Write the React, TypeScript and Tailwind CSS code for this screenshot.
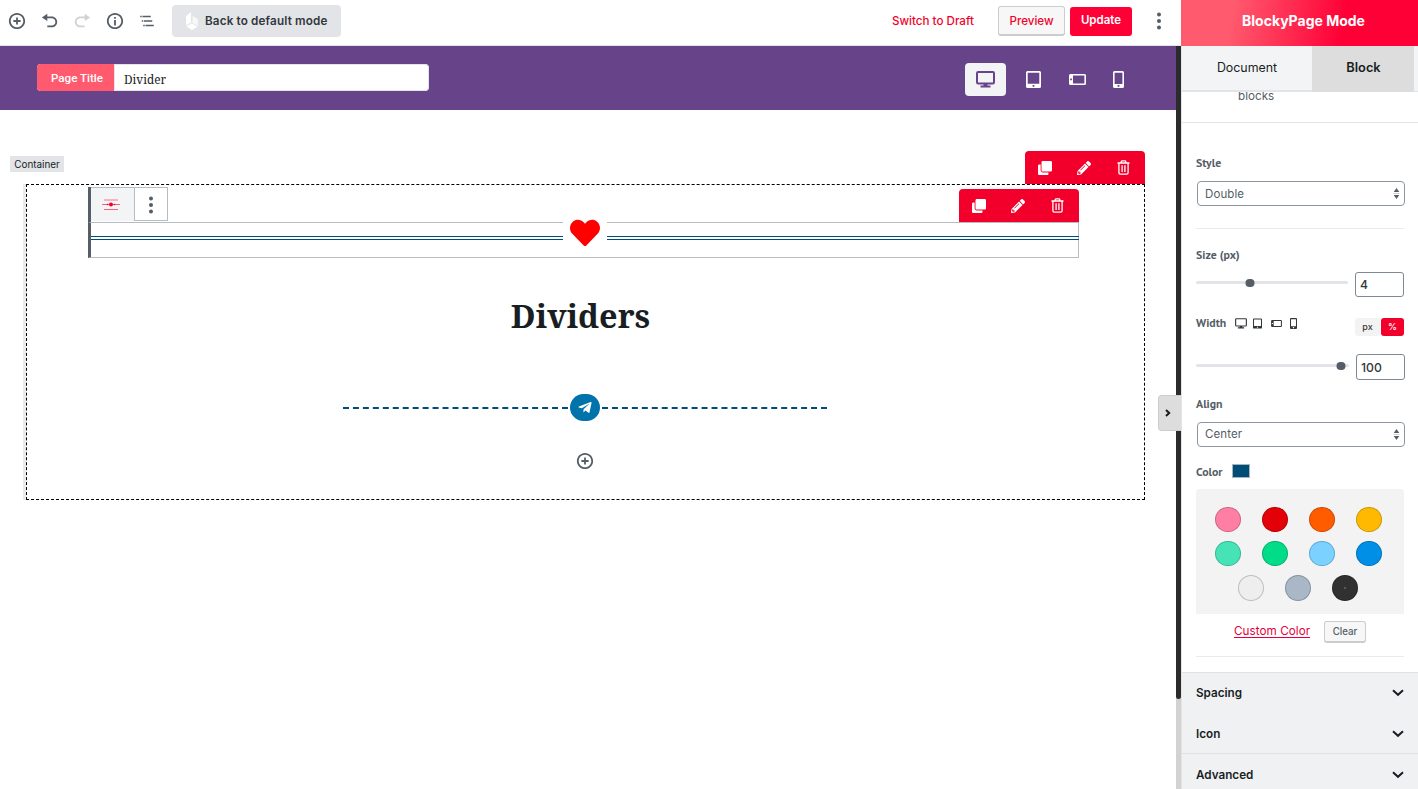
import type { ReactNode } from 'react';
import { FaClone, FaHeart, FaPencilAlt, FaTelegramPlane } from 'react-icons/fa';

const SERIF = "font-['Noto_Serif','DejaVu_Serif_Condensed','DejaVu_Serif',serif]";

function InsertIcon({ size = 18 }: { size?: number }) {
  return (
    <svg width={size} height={size} viewBox="0 0 20 20" fill="currentColor">
      <path d="M10 1c-5 0-9 4-9 9s4 9 9 9 9-4 9-9-4-9-9-9zm0 16c-3.9 0-7-3.1-7-7s3.1-7 7-7 7 3.1 7 7-3.1 7-7 7zm1-11H9v3H6v2h3v3h2v-3h3V9h-3V6z" />
    </svg>
  );
}

function UndoIcon() {
  return (
    <svg width="18" height="18" viewBox="0 0 20 20" fill="currentColor">
      <path d="M12 5H7V2L1 6l6 4V7h5c2.2 0 4 1.8 4 4s-1.8 4-4 4H7v2h5c3.3 0 6-2.7 6-6s-2.7-6-6-6z" />
    </svg>
  );
}

function RedoIcon() {
  return (
    <svg width="18" height="18" viewBox="0 0 20 20" fill="currentColor">
      <path d="M8 5h5V2l6 4-6 4V7H8c-2.2 0-4 1.8-4 4s1.8 4 4 4h5v2H8c-3.3 0-6-2.7-6-6s2.7-6 6-6z" />
    </svg>
  );
}

function InfoIcon() {
  return (
    <svg width="18" height="18" viewBox="0 0 20 20" fill="currentColor">
      <path d="M10 1c-5 0-9 4-9 9s4 9 9 9 9-4 9-9-4-9-9-9zm0 16c-3.9 0-7-3.1-7-7s3.1-7 7-7 7 3.1 7 7-3.1 7-7 7zM9 9h2v6H9zM9 5.5h2v2H9z" />
    </svg>
  );
}

function NavigationIcon() {
  return (
    <svg width="18" height="18" viewBox="0 0 24 24" fill="currentColor">
      <path d="M5 5H3v2h2V5zm3 8h11v-2H8v2zm9-8H6v2h11V5zM7 11H5v2h2v-2zm0 8h2v-2H7v2zm3-2v2h11v-2H10z" />
    </svg>
  );
}

function Dots() {
  return (
    <svg width="4" height="18" viewBox="0 0 4 18" fill="currentColor">
      <circle cx="2" cy="2.6" r="2" />
      <circle cx="2" cy="9" r="2" />
      <circle cx="2" cy="15.4" r="2" />
    </svg>
  );
}

function LogoIcon() {
  return (
    <svg width="14" height="20" viewBox="0 0 14 20" fill="#fff">
      <path d="M1 5.2 6 1v10.6L1 14.3z" />
      <path d="m7.5 5 5.3 3v7l-5.3-3.2z" opacity=".75" />
      <path d="m1.2 15.3 5.6-3 5.6 3.4L7 19z" />
    </svg>
  );
}

function DesktopIcon({ width, height, stroke = 2 }: { width: number; height: number; stroke?: number }) {
  return (
    <svg width={width} height={height} viewBox="0 0 19 17">
      <rect x="1" y="1" width="17" height="11.5" rx="1.2" fill="none" stroke="currentColor" strokeWidth={stroke} />
      <path d="M7.5 12.5h4v2h3V16.500h-10V14.500h3z" fill="currentColor" />
    </svg>
  );
}

function TabletIcon({ width, height }: { width: number; height: number }) {
  return (
    <svg width={width} height={height} viewBox="0 0 15 17" fill="currentColor" fillRule="evenodd">
      <path d="M1.500 0h12A1.500 1.500 0 0 1 15 1.500v14a1.500 1.500 0 0 1-1.500 1.500h-12A1.500 1.500 0 0 1 0 15.500v-14A1.500 1.500 0 0 1 1.500 0zM1.700 1.700v11h11.600v-11zM6.600 14h1.800v1.700H6.600z" />
    </svg>
  );
}

function LandscapeIcon({ width, height }: { width: number; height: number }) {
  return (
    <svg width={width} height={height} viewBox="0 0 17 11" fill="currentColor" fillRule="evenodd">
      <path d="M1.500 0h14A1.500 1.500 0 0 1 17 1.500v8a1.500 1.500 0 0 1-1.500 1.500h-14A1.500 1.500 0 0 1 0 9.500v-8A1.500 1.500 0 0 1 1.500 0zM4 1.600v7.800h11.400V1.600zM1.200 4.600v1.700h1.700V4.600z" />
    </svg>
  );
}

function PhoneIcon({ width, height }: { width: number; height: number }) {
  return (
    <svg width={width} height={height} viewBox="0 0 11 17" fill="currentColor" fillRule="evenodd">
      <path d="M1.500 0h8A1.500 1.500 0 0 1 11 1.500v14A1.500 1.500 0 0 1 9.500 17h-8A1.500 1.500 0 0 1 0 15.500v-14A1.500 1.500 0 0 1 1.500 0zM1.600 1.700v11.200h7.800V1.700zM4.600 14.100h1.800v1.700H4.600z" />
    </svg>
  );
}

function TrashIcon() {
  return (
    <svg width="13" height="15" viewBox="0 0 13 15" fill="none" stroke="currentColor" strokeWidth="1.300">
      <path d="M.5 3h12M4.200 2.800V1.700q0-.8.8-.8h3q.8 0 .8.8v1.100M1.900 3.200v9.600q0 1.300 1.300 1.300h6.600q1.300 0 1.300-1.300V3.200M5.100 5.300v6.700M7.900 5.300v6.700" />
    </svg>
  );
}

function ChevronDown() {
  return (
    <svg width="12" height="8" viewBox="0 0 12 8" fill="none" stroke="#191e23" strokeWidth="2">
      <path d="m1 1.200 5 4.600 5-4.600" />
    </svg>
  );
}

function ActionBar() {
  return (
    <div className="flex h-[33px] w-[120px] items-center rounded-t-[4px] bg-[#f2002b] pl-[12.500px] text-white">
      <FaClone className="h-[14px] w-[14px]" />
      <FaPencilAlt className="ml-[25.500px] h-[14px] w-[14px]" />
      <span className="ml-[25.500px]"><TrashIcon /></span>
    </div>
  );
}

function TopBar() {
  return (
    <header className="flex h-[46px] shrink-0 items-center border-b border-[#e2e4e7] bg-white pb-[3px] pl-2 text-[#555d66]">
      <InsertIcon />
      <span className="ml-[15px]"><UndoIcon /></span>
      <span className="ml-[14px] text-[#cfd2d5]"><RedoIcon /></span>
      <span className="ml-[15px]"><InfoIcon /></span>
      <span className="ml-[14px]"><NavigationIcon /></span>
      <button className="ml-4 flex h-8 w-[169px] items-center rounded-[4px] bg-[#e2e4e7] pl-[13px] text-[11.700px] font-semibold tracking-[0.150px] text-[#32373c]">
        <LogoIcon />
        <span className="ml-[6px] whitespace-nowrap pt-[2px]">Back to default mode</span>
      </button>
      <button className="ml-[551px] w-[83px] whitespace-nowrap pt-[2px] text-left text-[11.600px] font-medium text-[#f2002b]">Switch to Draft</button>
      <button className="ml-[23px] h-[30px] w-[67px] rounded-[3px] border border-b-2 border-[#ccc] bg-[#f7f7f7] pt-[2px] text-[11.600px] font-medium text-[#f2002b]">Preview</button>
      <button className="ml-[5px] h-[29px] w-[62px] rounded-[3px] bg-[#ff0036] text-[11.500px] font-semibold text-white">Update</button>
      <span className="ml-[25px]"><Dots /></span>
    </header>
  );
}

function TitleBar() {
  return (
    <div className="flex h-16 shrink-0 items-start bg-[#674389] pl-[37px] text-white">
      <div className="mt-[18px] flex h-[27px] w-[392px] overflow-hidden rounded-[4px] bg-white">
        <span className="flex w-[77px] items-center justify-center bg-[#ff5a6e] pl-[3px] pt-[2px] font-['Roboto',sans-serif] text-[11.600px] font-medium">Page Title</span>
        <span className={`flex flex-1 items-center rounded-r-[4px] border border-[#e2e4e7] pl-[9px] pt-[4px] text-[11.800px] text-[#191e23] ${SERIF}`}>Divider</span>
      </div>
      <div className="ml-[536px] mt-[17px] flex h-[33px] items-center">
        <div className="flex h-[33px] w-[41px] items-center justify-center rounded-[4px] bg-[#f3f4f5] text-[#674389]">
          <DesktopIcon width={19} height={17} />
        </div>
        <span className="ml-5"><TabletIcon width={15} height={17} /></span>
        <span className="ml-7"><LandscapeIcon width={17} height={11} /></span>
        <span className="ml-[27px]"><PhoneIcon width={11} height={17} /></span>
      </div>
    </div>
  );
}

function BlockToolbar() {
  return (
    <div className="flex h-[35px] w-20 border-l-[3px] border-[#555d66]">
      <div className="flex h-[34px] w-[43px] items-center justify-center border-t border-[#b5bcc2] bg-[#f3f4f5] pr-[3px]">
        <svg width="18" height="12" viewBox="0 0 18 12">
          <path d="M2 0h14v2H2z" fill="#fbb1bf" />
          <path d="M0 5h18v1H0z" fill="#f2647c" />
          <path d="M2 10h14v1H2z" fill="#f2647c" />
          <circle cx="9" cy="5.500" r="2" fill="#f2002b" />
          <circle cx="5.500" cy="5.500" r=".8" fill="#f2002b" />
          <circle cx="12.500" cy="5.500" r=".8" fill="#f2002b" />
        </svg>
      </div>
      <div className="flex h-[34px] w-[34px] items-center justify-center border border-[#b5bcc2] bg-white pt-px text-[#555d66]"><Dots /></div>
    </div>
  );
}

function Canvas() {
  return (
    <main className="flex flex-1 flex-col bg-white">
      <div className="flex h-[74px] items-end justify-between pl-[10px] pr-[31px]">
        <span className="mb-3 flex h-4 w-[54px] items-center justify-center bg-[#e2e4e7] pt-px text-[9.900px] leading-[15px] text-[#191e23]">Container</span>
        <ActionBar />
      </div>
      <div className="ml-[23px] flex h-[316px] w-[1122px] border-l-[3px] border-[#e8eaeb]">
        <div className="flex flex-1 flex-col items-center border border-dashed border-black pr-[1px]">
          <div className="flex h-[37px] w-full items-end justify-between pl-[61px] pr-16">
            <BlockToolbar />
            <ActionBar />
          </div>
          <div className="flex h-9 w-full pl-[61px] pr-16">
            <div className="flex flex-1 border border-l-[3px] border-[#b5bcc2] border-l-[#555d66]">
              <div className="mt-[13px] h-1 w-[472px] border-t-4 border-double border-[#004e78]" />
              <div className="z-10 mt-[-6px] flex h-[31px] w-11 shrink-0 items-center justify-center bg-white">
                <FaHeart className="h-[30px] w-[30px] text-[#ff0000]" />
              </div>
              <div className="mr-[-1px] mt-[13px] h-1 flex-1 border-t-4 border-double border-[#004e78]" />
            </div>
          </div>
          <h1 className={`mr-[9px] mt-[33px] flex h-[48px] items-center whitespace-nowrap text-[32.400px] font-bold text-[#191e23] ${SERIF}`}>Dividers</h1>
          <div className="mt-[55px] flex h-[27px] w-[484px] items-center">
            <div className="mt-px h-0.5 w-[225px] border-t-2 border-dashed border-[#004e78]" />
            <div className="mx-[2px] flex h-[27px] w-[30px] items-center justify-center rounded-[14px] bg-[#0073aa] text-white">
              <FaTelegramPlane className="h-[15px] w-[14px]" />
            </div>
            <div className="mt-px h-0.5 w-[225px] border-t-2 border-dashed border-[#004e78]" />
          </div>
          <span className="mt-[31px] text-[#555d66]"><InsertIcon size={18} /></span>
        </div>
      </div>
    </main>
  );
}

function Label({ children }: { children: ReactNode }) {
  return <span className="font-['PT_Sans','Lato',sans-serif] text-[11.800px] font-bold leading-4 text-[#555d66]">{children}</span>;
}

function Select({ value, low }: { value: string; low?: boolean }) {
  return (
    <div className="ml-px flex h-[25px] w-[208px] items-center justify-between rounded-[4px] border border-[#8d96a0] pl-[7px] pr-[4px] text-[11.500px] tracking-[0.100px] text-[#555d66]">
      <span className={low ? 'pt-[2px]' : ''}>{value}</span>
      <svg className="mb-px" width="7" height="11" viewBox="0 0 7 11" fill="#555d66">
        <path d="M3.500 0 6.300 4H.7zM3.500 11 .7 7h5.600z" />
        <path d="M.5 5h6v.7h-6z" opacity=".4" />
      </svg>
    </div>
  );
}

function Slider({ percent, value, wide }: { percent: number; value: string; wide?: boolean }) {
  return (
    <div className="flex h-[26px] items-start">
      <div className={`relative h-[3px] rounded-full bg-[#e2e4e7] ${wide ? 'mt-[10px] w-[153px]' : 'mt-[9px] w-[152px]'}`}>
        <span className="absolute top-[-2.500px] h-2 w-[9px] -translate-x-1/2 rounded-full bg-[#555d66]" style={{ left: `${percent}%` }} />
      </div>
      <div className={`ml-[7px] flex w-[49px] items-center rounded-[3px] border border-[#7e8993] pl-1 pt-[2px] text-[12.200px] font-medium text-[#32373c] ${wide ? 'h-[26px]' : 'h-[25px]'}`}>{value}</div>
    </div>
  );
}

const SWATCHES = [
  ['bg-[#ff7ea3]', 'bg-[#e30008]', 'bg-[#ff5c00]', 'bg-[#ffb900]'],
  ['bg-[#46e3b7]', 'bg-[#00dc87]', 'bg-[#7bd1ff]', 'bg-[#008fe6]'],
  ['bg-[#eeeeee]', 'bg-[#a9b7c6]', 'bg-[#313131]'],
];

function Palette() {
  return (
    <div className="flex h-[125px] w-[208px] flex-col items-center gap-[9px] rounded-t-[3px] bg-[#f3f3f3] pr-1 pt-[18px]">
      {SWATCHES.map((row, i) => (
        <div key={i} className="flex gap-[21px]">
          {row.map((color) => (
            <span key={color} className={`flex w-[26px] items-center justify-center rounded-full border border-black/20 ${i === 2 ? 'h-[26px]' : 'h-[25px]'} ${color}`}>
              {color === 'bg-[#313131]' && <span className="h-0.5 w-0.5 rounded-full bg-[#666]" />}
            </span>
          ))}
        </div>
      ))}
    </div>
  );
}

function PanelRow({ title }: { title: string }) {
  return (
    <div className="flex h-[41px] items-center justify-between pl-[14px] pr-[14px] text-[11.700px] font-semibold text-[#191e23]">
      <span>{title}</span>
      <span className="mb-[2px]"><ChevronDown /></span>
    </div>
  );
}

function Sidebar() {
  return (
    <aside className="relative flex w-[237px] shrink-0 flex-col bg-white">
      <div className="flex h-[46px] shrink-0 items-center justify-center bg-[linear-gradient(100deg,#ff5a6e_22%,#ff0036_68%)] pb-[5px] pl-2 text-[14px] font-bold text-white">BlockyPage Mode</div>
      <div className="flex min-h-0 flex-1 flex-col overflow-hidden border-l border-[#e2e4e7]">
        <div className="flex h-[46px] shrink-0 bg-[#f3f4f5] text-[#191e23]">
          <div className="flex w-[130px] items-center justify-center border-b-2 border-[#e2e4e7] text-[12.400px]">Document</div>
          <div className="flex w-[102px] items-center justify-center bg-[#ddd] pb-[2px] pl-px text-[12.800px] font-semibold">Block</div>
          <div className="flex-1 border-b border-[#e2e4e7]" />
        </div>
        <div className="flex h-[31px] shrink-0 items-start overflow-hidden border-b border-[#e2e4e7] pl-14">
          <span className="mt-[-5px] text-[11.700px] leading-[18px] text-[#555d66]">blocks</span>
        </div>
        <div className="flex flex-col pl-[14px]">
          <div className="mt-8 flex h-4"><Label>Style</Label></div>
          <div className="mt-[10px]"><Select value="Double" low /></div>
          <div className="mt-[22px] w-[208px] border-t border-[#e8eaeb]" />
          <div className="mt-[18px] flex h-4"><Label>Size (px)</Label></div>
          <div className="mt-[9px]"><Slider percent={35.200} value="4" /></div>
          <div className="mt-[17px] flex h-[21px] w-[208px]">
            <Label>Width</Label>
            <div className="ml-[9px] flex h-4 items-center text-[#32373c]">
              <DesktopIcon width={12} height={11} stroke={1.8} />
              <span className="ml-[6px]"><TabletIcon width={9} height={11} /></span>
              <span className="ml-[9px]"><LandscapeIcon width={11} height={7} /></span>
              <span className="ml-2"><PhoneIcon width={7} height={11} /></span>
            </div>
            <div className="ml-auto mt-[3px] flex h-[18px] gap-px text-[9px] font-medium">
              <span className="flex w-[25px] items-center justify-center rounded-[3px] bg-[#f3f3f3] text-[#32373c]">px</span>
              <span className="flex w-[23px] items-center justify-center rounded-[3px] bg-[#f2002b] text-white">%</span>
            </div>
          </div>
          <div className="mt-[18px]"><Slider percent={94.700} value="100" wide /></div>
          <div className="mt-4 flex h-4"><Label>Align</Label></div>
          <div className="mt-[10px]"><Select value="Center" /></div>
          <div className="mt-[17px] flex h-4 gap-[10px]">
            <Label>Color</Label>
            <span className="h-[14px] w-[18px] border border-[#aab4bc] bg-[#004e78]" />
          </div>
          <div className="mt-[9px]"><Palette /></div>
          <div className="mt-[7px] flex h-[22px] w-[208px] items-center">
            <span className="ml-[38px] w-[90px] whitespace-nowrap text-[11.700px] tracking-[0.040px] text-[#e6003a] underline underline-offset-2">Custom Color</span>
            <button className="h-[22px] w-[42px] rounded-[3px] border border-b-2 border-[#ccc] bg-[#f7f7f7] pt-px text-[9.700px] font-medium text-[#555d66]">Clear</button>
          </div>
          <div className="mt-[13px] w-[208px] border-t border-[#e8eaeb]" />
        </div>
        <div className="mt-[15px] flex-1 shrink-0 border-t border-[#dfe1e4] bg-[#f0f1f3]">
          <PanelRow title="Spacing" />
          <PanelRow title="Icon" />
          <div className="mt-[-2px] border-t border-[#dfe1e4] pt-px"><PanelRow title="Advanced" /></div>
        </div>
      </div>
      <button className="absolute left-[-23px] top-[395px] flex h-9 w-[23px] items-center justify-center rounded-l-[4px] border border-r-0 border-[#ccc] bg-[#ddd] pr-1">
        <svg width="6" height="8" viewBox="0 0 6 8" fill="none" stroke="#191e23" strokeWidth="2"><path d="m1 1 3.200 3L1 7" /></svg>
      </button>
    </aside>
  );
}

export default function App() {
  return (
    <div className="flex h-[789px] w-[1418px] overflow-hidden bg-white font-['Inter',sans-serif]">
      <div className="flex w-[1181px] shrink-0 flex-col">
        <TopBar />
        <div className="flex min-h-0 flex-1">
          <div className="flex w-[1176px] shrink-0 flex-col">
            <TitleBar />
            <Canvas />
          </div>
          <div className="w-[5px] bg-[#d2d2d2]"><div className="h-[653px] rounded-b bg-[#2b2b2b]" /></div>
        </div>
      </div>
      <Sidebar />
    </div>
  );
}
